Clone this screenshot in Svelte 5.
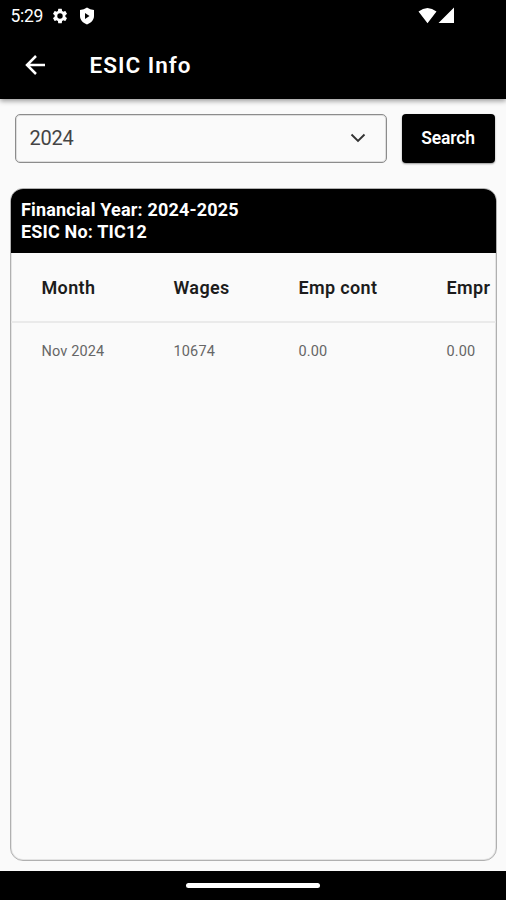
<script>
  const headers = ['Month', 'Wages', 'Emp cont', 'Empr'];
  const row = ['Nov 2024', '10674', '0.00', '0.00'];
</script>

<div class="screen">
  <header>
    <div class="status">
      <span class="time">5:29</span>
      <svg class="gear" width="18" height="18" viewBox="0 0 24 24"><path fill="#fff" d="M19.14 12.94c.04-.3.06-.61.06-.94s-.02-.64-.07-.94l2.03-1.58a.49.49 0 0 0 .12-.61l-1.92-3.32a.49.49 0 0 0-.59-.22l-2.39.96a7 7 0 0 0-1.62-.94l-.36-2.54A.48.48 0 0 0 13.92 2.4h-3.84a.47.47 0 0 0-.47.41l-.36 2.54a7.4 7.4 0 0 0-1.62.94l-2.39-.96a.48.48 0 0 0-.59.22L2.74 8.87a.47.47 0 0 0 .12.61l2.03 1.58a6 6 0 0 0-.02 1.88l-2.03 1.58a.49.49 0 0 0-.12.61l1.92 3.32c.12.22.37.29.59.22l2.39-.96c.5.38 1.03.7 1.62.94l.36 2.54c.05.24.24.41.48.41h3.84c.24 0 .44-.17.47-.41l.36-2.54a7 7 0 0 0 1.62-.94l2.39.96c.22.08.47 0 .59-.22l1.92-3.32a.47.47 0 0 0-.12-.61zM12 15.6a3.6 3.6 0 1 1 0-7.2 3.6 3.6 0 0 1 0 7.2z"/></svg>
      <svg class="shield" width="16" height="18" viewBox="0 0 16 18"><path fill="#fff" d="M8 .5Q11 2.500 15 3v6c0 4-3 7-7 8.500C4 16 1 13 1 9V3Q5 2.500 8 .5z"/><path fill="#000" d="m6 6 4.500 3L6 12z"/></svg>
      <svg class="signal" width="36" height="17" viewBox="0 0 36 17"><path fill="#fff" d="M.5 4.500Q9.500-2.500 18.500 4.500L9.500 16.200zM36 .5v15.500H20.500z"/></svg>
    </div>
    <div class="bar">
      <svg width="22" height="22" viewBox="0 0 22 22"><path d="M21 11H3M12 2l-9 9 9 9" fill="none" stroke="#fff" stroke-width="2.500"/></svg>
      <h1>ESIC Info</h1>
    </div>
  </header>
  <div class="filters">
    <div class="select"><span>2024</span><svg width="16" height="10" viewBox="0 0 16 10"><path d="m1.500 1.500 6.500 6.500 6.500-6.500" fill="none" stroke="#333" stroke-width="1.900"/></svg></div>
    <button>Search</button>
  </div>
  <main>
    <div class="title">Financial Year: 2024-2025<br />ESIC No: TIC12</div>
    <div class="row head">{#each headers as h}<span>{h}</span>{/each}</div>
    <div class="row">{#each row as c}<span>{c}</span>{/each}</div>
  </main>
  <footer><i></i></footer>
</div>

<style>
  .screen { box-sizing: border-box; width: 506px; height: 900px; background: #fafafa; display: flex; flex-direction: column; overflow: hidden; font-family: Roboto, sans-serif; }
  header { height: 98.500px; flex: none; background: #000; color: #fff; box-shadow: 0 2px 5px #0006; }
  .status { height: 31px; display: flex; align-items: center; padding: 0 52px 0 10.500px; }
  .time { font-size: 17.500px; width: 40.500px; letter-spacing: -.3px; }
  .shield { margin-left: 10px; }
  .signal { margin-left: auto; }
  .bar { height: 67px; display: flex; align-items: center; padding-left: 23.500px; gap: 44px; }
  h1 { margin: 1px 0 0; font-size: 22.500px; font-weight: 600; letter-spacing: 1px; }
  .filters { height: 49px; flex: none; display: flex; gap: 14.500px; padding: 15px 11px 0 15px; }
  .select { box-sizing: border-box; width: 372px; height: 49px; border: 1px solid #8c8c8c; box-shadow: inset 0 0 0 1px #dedede; border-radius: 5px; display: flex; align-items: center; justify-content: space-between; padding: 0 20px 0 13.500px; font-size: 20px; color: #444; letter-spacing: -.2px; }
  button { width: 93px; height: 49px; border: 0; border-radius: 4px; background: #000; color: #fff; font: 600 17.500px Roboto, sans-serif; letter-spacing: -.15px; padding: 0; box-shadow: 0 1px 2px #0006; }
  main { box-sizing: border-box; margin: 25.500px 9px 10px 10px; flex: 1; border: 1px solid #b0b0b0; box-shadow: inset 0 0 0 1px #e4e4e4; border-radius: 13px; }
  .title { box-sizing: border-box; height: 64px; background: #000; border-radius: 12px 12px 0 0; color: #fff; font-size: 18px; line-height: 22px; font-weight: 700; padding: 10px; letter-spacing: .18px; }
  .row { box-sizing: border-box; height: 60px; display: grid; grid-template-columns: 132px 125px 148px 1fr; align-items: center; padding: 0 0 3px 30.500px; font-size: 14.500px; font-weight: 400; color: #666; letter-spacing: .15px; }
  .head { height: 70px; border-bottom: 2px solid #eaeaea; font-size: 18px; font-weight: 600; color: #1c1c1c; letter-spacing: .35px; padding-bottom: 0; }
  footer { height: 29px; flex: none; background: #000; display: flex; align-items: center; justify-content: center; }
  i { width: 134px; height: 5px; border-radius: 3px; background: #fff; }
</style>
